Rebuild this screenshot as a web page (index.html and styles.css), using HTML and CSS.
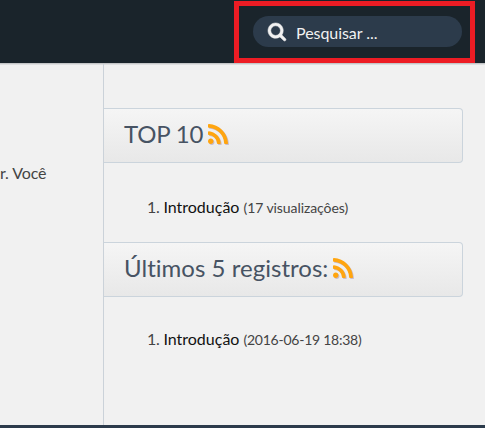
FILE: index.html
```html
<!DOCTYPE html>
<html lang="pt-BR">
<head>
<meta charset="utf-8">
<title>Introdução</title>
<link rel="stylesheet" href="styles.css">
</head>
<body>
<header class="topbar">
  <div class="highlight">
    <div class="search">
      <svg class="search-icon" viewBox="0 0 1664 1664"><path d="M1152 704q0-185-131.500-316.500T704 256 387.500 387.500 256 704t131.500 316.500T704 1152t316.500-131.500T1152 704zm512 832q0 52-38 90t-90 38q-54 0-90-38l-343-342q-179 124-399 124-143 0-273.500-55.500t-225-150-150-225T0 704t55.500-273.500 150-225 225-150T704 0t273.500 55.500 225 150 150 225T1408 704q0 220-124 399l343 343q37 37 37 90z"/></svg>
      <span class="search-text">Pesquisar ...</span>
    </div>
  </div>
</header>
<main class="page">
  <section class="content"><p class="excerpt">r. Você</p></section>
  <aside class="sidebar">
    <h3 class="heading"><span>TOP 10</span>
      <svg class="rss" viewBox="0 0 1408 1408"><path d="M384 1216q0 80-56 136t-136 56-136-56-56-136 56-136 136-56 136 56 56 136zm512 123q2 28-17 48-18 21-47 21H697q-25 0-43-16.500t-20-41.500q-22-229-184.500-391.500T58 774q-25-2-41.500-20T0 711V576q0-29 21-47 17-17 43-17h5q160 13 306 80.500T634 774q114 113 181.500 259t80.500 306zm512 2q2 27-18 47-18 20-46 20h-143q-26 0-44.500-17.500T1137 1348q-12-215-101-408.500t-231.500-336-336-231.500T60 270q-25-1-42.500-19.500T0 207V64q0-28 20-46Q38 0 64 0h3q262 13 501.500 120T994 414q187 186 294 425.500t120 501.500z"/></svg>
    </h3>
    <ol class="list"><li><span class="num">1.</span> <a>Introdução</a> <small>(17 visualizaçôes)</small></li></ol>
    <h3 class="heading recent"><span>Últimos 5 registros:</span>
      <svg class="rss" viewBox="0 0 1408 1408"><path d="M384 1216q0 80-56 136t-136 56-136-56-56-136 56-136 136-56 136 56 56 136zm512 123q2 28-17 48-18 21-47 21H697q-25 0-43-16.500t-20-41.500q-22-229-184.500-391.500T58 774q-25-2-41.500-20T0 711V576q0-29 21-47 17-17 43-17h5q160 13 306 80.500T634 774q114 113 181.500 259t80.500 306zm512 2q2 27-18 47-18 20-46 20h-143q-26 0-44.500-17.500T1137 1348q-12-215-101-408.500t-231.500-336-336-231.500T60 270q-25-1-42.500-19.500T0 207V64q0-28 20-46Q38 0 64 0h3q262 13 501.500 120T994 414q187 186 294 425.500t120 501.500z"/></svg>
    </h3>
    <ol class="list dates"><li><span class="num">1.</span> <a>Introdução</a> <small>(2016-06-19 18:38)</small></li></ol>
  </aside>
</main>
<footer class="footer"></footer>
</body>
</html>
```
FILE: styles.css
```css
* { box-sizing: border-box; }
body {
  margin: 0;
  height: 428px;
  overflow: hidden;
  display: flex;
  flex-direction: column;
  background: #f1f1f1;
  color: #444;
  font: 16px/24px Lato, sans-serif;
  font-variant-ligatures: none;
}
.topbar {
  height: 63px;
  flex: none;
  display: flex;
  justify-content: flex-end;
  padding: 1px 10px 0 0;
  background: #1a242b;
}
.highlight {
  width: 241px;
  height: 62px;
  border: 5px solid #ed1c24;
  padding: 10px 8px 0 14px;
}
.search {
  height: 31px;
  border-radius: 16px;
  background: #2c3b4b;
  display: flex;
  align-items: center;
  padding-left: 15px;
  gap: 10px;
}
.search-icon {
  width: 18px;
  height: 18px;
  fill: #f1f1f1;
  stroke: #f1f1f1;
  stroke-width: 50;
  overflow: visible;
}
.search-text { color: #f1f1f1; padding-top: 3px; letter-spacing: -0.05px; }
.page {
  flex: 1;
  display: flex;
  border-top: 1px solid #c4c6c8;
  box-shadow: inset 0 1px #dedfe0;
}
.content { width: 103px; }
.excerpt { margin: 97px 0 0; letter-spacing: -0.1px; }
.sidebar {
  width: 360px;
  border-left: 1px solid #cbd2d9;
  padding-top: 44px;
}
.heading {
  margin: 0;
  height: 55px;
  border: 1px solid #cbd4dc;
  border-left: 0;
  border-radius: 0 4px 4px 0;
  background: linear-gradient(#f5f5f5, #e8e8e8);
  display: flex;
  align-items: center;
  gap: 5px;
  padding: 0 0 3px 20px;
  color: #475363;
  font-size: 24px;
  font-weight: 400;
  letter-spacing: -0.2px;
}
.recent { letter-spacing: 0.03px; }
.rss { width: 20px; height: 20px; fill: #ffa50f; filter: drop-shadow(1px 1px 0 #c9bccb); }
.list {
  list-style: none;
  margin: 0;
  height: 79px;
  padding: 32px 0 0 43px;
}
.dates { padding-top: 30px; }
.list a { color: #111; }
.num { letter-spacing: -0.4px; }
.list small { font-size: 14px; letter-spacing: -0.08px; }
.dates small { letter-spacing: -0.25px; }
.footer { height: 3px; background: #2c3b4b; }
```
